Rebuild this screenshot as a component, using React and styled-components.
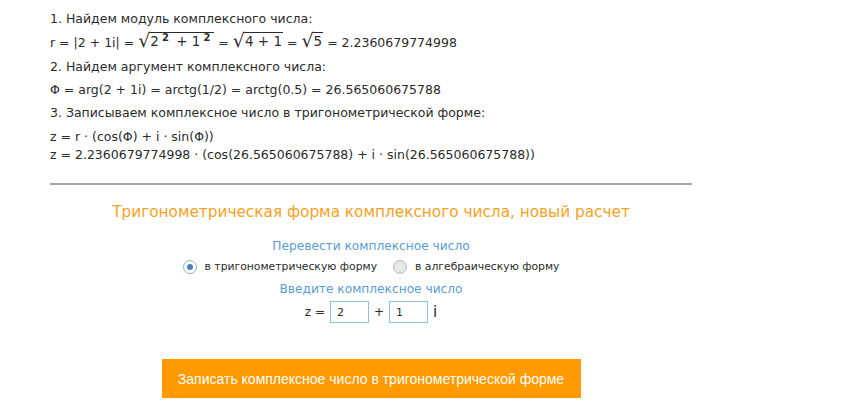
import React from "react";
import styled, { createGlobalStyle } from "styled-components";

const Global = createGlobalStyle`
  html, body { margin: 0; padding: 0; background: #fff; }
  body { font-family: "DejaVu Sans", Verdana, sans-serif; color: #2b2b2b; }
`;

const Page = styled.div`
  width: 642px;
  margin-left: 50px;
  padding-top: 7px;
`;

const Line = styled.div`
  font-size: 12.5px;
  line-height: ${(p) => p.$h || 23}px;
  white-space: nowrap;
`;

const Root = styled.span`
  display: inline-flex;
  align-items: flex-end;
`;

const RootSign = styled.span`
  font-size: 19px;
  line-height: 1;
  margin-right: -1px;
`;

const Radicand = styled.span`
  border-top: 1.5px solid #2b2b2b;
  font-size: 13.5px;
  line-height: 17px;
  padding: 0 1px;
`;

const Sup = styled.sup`
  font-weight: bold;
  font-size: 10px;
  line-height: 0;
  margin: 0 3px;
`;

const Formula = styled.div`
  margin-top: 4px;
  font-size: 12.5px;
  line-height: 18px;
  white-space: nowrap;
`;

const Rule = styled.hr`
  border: none;
  border-top: 2px solid #a8a8a8;
  margin: 19px 0 0;
`;

const Heading = styled.h2`
  margin: 16px 0 0;
  text-align: center;
  font-weight: normal;
  font-size: 15.3px;
  line-height: 22px;
  color: #f5a21f;
`;

const Form = styled.form`
  display: flex;
  flex-direction: column;
  align-items: center;
  margin-top: 12px;
`;

const Caption = styled.div`
  font-size: 12.2px;
  line-height: ${(p) => p.$h || 22}px;
  color: #5a9ccf;
`;

const RadioRow = styled.div`
  display: flex;
  align-items: center;
  gap: 16px;
  font-size: 10.8px;
  line-height: 20px;
  color: #2b2b2b;
`;

const RadioLabel = styled.label`
  display: flex;
  align-items: center;
  gap: 8px;
`;

const RadioDot = styled.span`
  width: 12px;
  height: 12px;
  border-radius: 50%;
  border: 1px solid ${(p) => (p.$checked ? "#8fb3d6" : "#b9b9b9")};
  background: ${(p) => (p.$checked ? "#fff" : "#e8e8e8")};
  display: flex;
  align-items: center;
  justify-content: center;
  &::after {
    content: "";
    width: 6px;
    height: 6px;
    border-radius: 50%;
    background: ${(p) => (p.$checked ? "#4a7fbf" : "transparent")};
  }
`;

const InputRow = styled.div`
  display: flex;
  align-items: center;
  gap: 5px;
  font-size: 12px;
  color: #2b2b2b;
`;

const Box = styled.input`
  width: 39px;
  height: 22px;
  box-sizing: border-box;
  border: 1px solid #8cc3da;
  padding: 0 6px;
  font-family: "DejaVu Sans", Verdana, sans-serif;
  font-size: 11px;
  color: #2b2b2b;
  outline: none;
`;

const Imag = styled.span`
  font-size: 15px;
`;

const Button = styled.button`
  margin-top: 36px;
  width: 419px;
  height: 39px;
  border: none;
  background: #ff9a00;
  color: #fff;
  font-family: "Liberation Sans", Arial, sans-serif;
  font-size: 14px;
  cursor: pointer;
`;

export default function App() {
  return (
    <>
      <Global />
      <Page>
        <Line>1. Найдем модуль комплексного числа:</Line>
        <Line $h={25}>
          r = |2 + 1i| ={" "}
          <Root>
            <RootSign>√</RootSign>
            <Radicand>
              2<Sup>2</Sup> + 1<Sup>2</Sup>
            </Radicand>
          </Root>{" "}
          ={" "}
          <Root>
            <RootSign>√</RootSign>
            <Radicand>4 + 1</Radicand>
          </Root>{" "}
          ={" "}
          <Root>
            <RootSign>√</RootSign>
            <Radicand>5</Radicand>
          </Root>{" "}
          = 2.2360679774998
        </Line>
        <Line>2. Найдем аргумент комплексного числа:</Line>
        <Line>Φ = arg(2 + 1i) = arctg(1/2) = arctg(0.5) = 26.565060675788</Line>
        <Line>3. Записываем комплексное число в тригонометрической форме:</Line>
        <Formula>
          z = r · (cos(Φ) + i · sin(Φ))
          <br />
          z = 2.2360679774998 · (cos(26.565060675788) + i · sin(26.565060675788))
        </Formula>
        <Rule />
        <Heading>Тригонометрическая форма комплексного числа, новый расчет</Heading>
        <Form onSubmit={(e) => e.preventDefault()}>
          <Caption>Перевести комплексное число</Caption>
          <RadioRow>
            <RadioLabel>
              <RadioDot $checked />в тригонометрическую форму
            </RadioLabel>
            <RadioLabel>
              <RadioDot />в алгебраическую форму
            </RadioLabel>
          </RadioRow>
          <Caption $h={24}>Введите комплексное число</Caption>
          <InputRow>
            z = <Box defaultValue="2" /> + <Box defaultValue="1" />
            <Imag>i</Imag>
          </InputRow>
          <Button type="submit">Записать комплексное число в тригонометрической форме</Button>
        </Form>
      </Page>
    </>
  );
}
